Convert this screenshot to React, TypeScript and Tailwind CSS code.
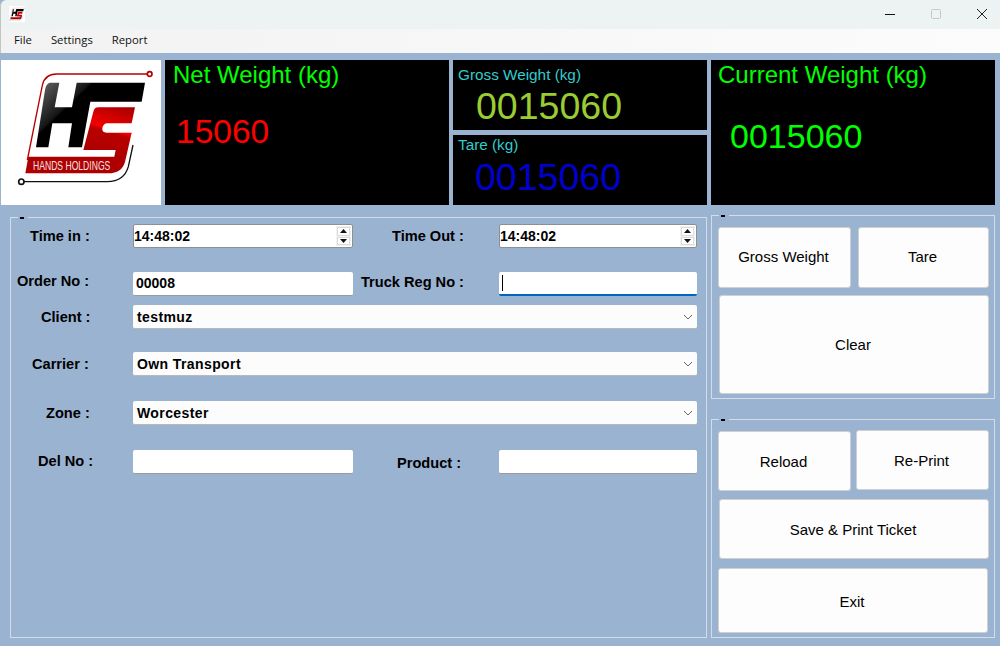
import type { ReactNode } from "react";

function HsLogo({ small = false }: { small?: boolean }) {
  return (
    <svg viewBox={small ? "40 20 430 360" : "3 0 480 435"} className="h-full w-full">
      <defs>
        <linearGradient id="hsBlack" gradientUnits="userSpaceOnUse" x1="140" y1="70" x2="250" y2="185">
          <stop offset="0" stopColor="#5a5a5a" />
          <stop offset="0.55" stopColor="#161616" />
          <stop offset="0.6" stopColor="#000" />
          <stop offset="1" stopColor="#000" />
        </linearGradient>
        <linearGradient id="hsRed" gradientUnits="userSpaceOnUse" x1="345" y1="130" x2="300" y2="280">
          <stop offset="0" stopColor="#a80000" />
          <stop offset="0.5" stopColor="#f40000" />
          <stop offset="0.56" stopColor="#b80000" />
          <stop offset="1" stopColor="#ae0000" />
        </linearGradient>
      </defs>
      <path d="M441 42H170Q134 42 127 76L82 300" fill="none" stroke="#b80000" strokeWidth="4" />
      <circle cx="449" cy="42" r="7" fill="#fff" stroke="#b00000" strokeWidth="5" />
      <path d="M72 365H322Q372 365 385 320L399 255" fill="none" stroke="#111" strokeWidth="4" />
      <circle cx="64" cy="365" r="8" fill="#fff" stroke="#111" strokeWidth="5" />
      <path
        d="M150 68H178L164 142H216L230 68H435L425 125H271L246 262H205L216 190H157L145 262H108L135 90Q138 70 150 68Z"
        fill="url(#hsBlack)"
      />
      <path
        d="M295 142H405L395 190H322Q310 190 307 204Q305 218 320 218H395L375 306Q365 340 325 340H76L85 290H343L347 270H250L280 155Q283 142 295 142Z"
        fill="url(#hsRed)"
      />
      {!small && (
        <text
          x="99"
          y="330"
          fill="#f4e4e4"
          fontSize="38"
          textLength="232"
          lengthAdjust="spacingAndGlyphs"
          fontFamily='"Liberation Sans", sans-serif'
        >
          HANDS HOLDINGS
        </text>
      )}
    </svg>
  );
}

function Group({ className, children }: { className: string; children: ReactNode }) {
  return (
    <div className={`relative border border-[#d3dde8] ${className}`}>
      <span className="absolute left-[7px] -top-[1px] h-[3px] w-[10px] bg-[#9ab3d1] pl-[2px]">
        <span className="block h-[2px] w-[4px] bg-black" />
      </span>
      {children}
    </div>
  );
}

function WinButton({ className, children }: { className: string; children: ReactNode }) {
  return (
    <button
      type="button"
      className={`flex items-center justify-center rounded-[3px] border border-[#d0d0d0] bg-[#fdfdfd] pr-[2px] text-[15px] text-black ${className}`}
    >
      {children}
    </button>
  );
}

function Label({ className, children }: { className: string; children: ReactNode }) {
  return <span className={`whitespace-nowrap text-[14.6px] font-bold text-black ${className}`}>{children}</span>;
}

function TimeBox({ value, width }: { value: string; width: string }) {
  return (
    <div className={`flex h-[24px] items-center justify-between rounded-[2px] border border-[#8f8f8f] bg-white pr-[1px] text-[14px] font-bold text-black ${width}`}>
      <span>{value}</span>
      <div className="flex h-[20px] w-[15px] flex-col gap-[1px] bg-[#f2f2f2] p-[1px]">
        <span className="flex flex-1 items-center justify-center border border-[#dcdcdc] bg-white">
          <svg width="7" height="4" viewBox="0 0 7 4"><path d="M3.5 0L7 4H0Z" fill="#111" /></svg>
        </span>
        <span className="flex flex-1 items-center justify-center border border-[#dcdcdc] bg-white">
          <svg width="7" height="4" viewBox="0 0 7 4"><path d="M0 0H7L3.5 4Z" fill="#111" /></svg>
        </span>
      </div>
    </div>
  );
}

function TextBox({ value, width, focused = false }: { value?: string; width: string; focused?: boolean }) {
  return (
    <div
      className={`flex h-[24px] items-center rounded-[2px] bg-white pl-[3px] text-[14px] font-bold text-black ${width} ${
        focused ? "border-b-2 border-[#0067c0]" : "border-b border-[#9a9a9a]"
      }`}
    >
      {focused ? <span className="h-[16px] w-[1px] bg-black" /> : value}
    </div>
  );
}

function ComboBox({ value }: { value: string }) {
  return (
    <div className="flex h-[24px] w-[564px] items-center justify-between rounded-[2px] border-b border-[#b9b9b9] bg-[#fcfcfc] pr-[4px] pl-[4px] pt-[1px] text-[14px] font-bold tracking-[0.4px] text-black">
      <span>{value}</span>
      <svg width="10" height="6" viewBox="0 0 10 6">
        <path d="M1 1L5 5L9 1" fill="none" stroke="#666" strokeWidth="1" />
      </svg>
    </div>
  );
}

export default function App() {
  return (
    <div
      className="flex h-[646px] w-[1000px] flex-col overflow-hidden bg-[#9ab3d1]"
      style={{ fontFamily: '"Liberation Sans", Arial, sans-serif' }}
    >
      {/* title bar */}
      <div className="flex h-[29px] items-center justify-between rounded-tl-[6px] border-l border-[#c4c4c4] bg-[#edf3f3] pl-[8px]">
        <div className="mb-[2px] h-[16px] w-[16px] bg-white">
          <HsLogo small />
        </div>
        <div className="mb-[2px] flex items-center gap-[36px] pr-[13px]">
          <svg width="10" height="10" viewBox="0 0 10 10"><path d="M0 5.5H10" stroke="#111" strokeWidth="1" /></svg>
          <svg width="10" height="10" viewBox="0 0 10 10"><rect x="0.5" y="0.5" width="9" height="9" rx="1" fill="none" stroke="#c6c9c9" /></svg>
          <svg width="10" height="10" viewBox="0 0 10 10"><path d="M0 0L10 10M10 0L0 10" stroke="#222" strokeWidth="1" /></svg>
        </div>
      </div>

      {/* menu */}
      <div
        className="flex h-[24px] items-center gap-[19px] border-l border-[#c4c4c4] bg-gradient-to-r from-[#f2f2f2] to-[#fcfcfc] pb-[1px] pl-[13px] text-[11.3px] text-[#111]"
        style={{ fontFamily: '"Open Sans", "Noto Sans", sans-serif' }}
      >
        <span>File</span>
        <span>Settings</span>
        <span>Report</span>
      </div>

      {/* weight displays */}
      <div className="mt-[7px] flex h-[145px] gap-[4px] pl-[1px]">
        <div className="w-[160px] bg-white">
          <HsLogo />
        </div>
        <div className="flex w-[284px] flex-col bg-black pl-[8px] text-[24px] leading-[30px] text-[#00ff00]">
          <span>Net Weight (kg)</span>
          <span className="mt-[22px] pl-[3px] text-[33.5px] leading-[40px] text-[#ff0000]">15060</span>
        </div>
        <div className="flex w-[254px] flex-col gap-[5px]">
          <div className="flex h-[70px] flex-col bg-black pl-[5px]">
            <span className="mt-[6px] text-[15.3px] leading-[18px] text-[#33cccc]">Gross Weight (kg)</span>
            <span className="mt-[1px] pl-[18px] text-[37.5px] leading-[42px] text-[#9acd32]">0015060</span>
          </div>
          <div className="flex h-[70px] flex-col bg-black pl-[5px]">
            <span className="mt-[1px] text-[15.3px] leading-[18px] text-[#33cccc]">Tare (kg)</span>
            <span className="mt-[2px] pl-[17px] text-[37.5px] leading-[42px] text-[#0000cd]">0015060</span>
          </div>
        </div>
        <div className="flex w-[284px] flex-col bg-black pl-[7px] text-[24px] leading-[30px] text-[#00ff00]">
          <span>Current Weight (kg)</span>
          <span className="mt-[26px] pl-[12px] text-[34px] leading-[40px]">0015060</span>
        </div>
      </div>

      <div className="flex pl-[10px]">
        {/* ticket form */}
        <Group className="mt-[12px] h-[421px] w-[697px]">
          <div className="flex flex-col pt-[6px]">
            <div className="flex h-[24px] items-center">
              <Label className="ml-[19px] mt-[1px] w-[103px]">Time in :</Label>
              <TimeBox value="14:48:02" width="w-[220px]" />
              <Label className="ml-[39px] mt-[1px] w-[107px]">Time Out :</Label>
              <TimeBox value="14:48:02" width="w-[198px]" />
            </div>
            <div className="mt-[24px] flex h-[24px] items-center">
              <Label className="mb-[4px] ml-[6px] w-[116px]">Order No :</Label>
              <TextBox value="00008" width="w-[220px]" />
              <Label className="mb-[2px] ml-[8px] w-[138px]">Truck Reg No :</Label>
              <TextBox width="w-[198px]" focused />
            </div>
            <div className="mt-[9px] flex h-[24px] items-center">
              <Label className="ml-[30px] mt-[1px] w-[92px]">Client :</Label>
              <ComboBox value="testmuz" />
            </div>
            <div className="mt-[23px] flex h-[24px] items-center">
              <Label className="ml-[21px] mt-[2px] w-[101px]">Carrier :</Label>
              <ComboBox value="Own Transport" />
            </div>
            <div className="mt-[25px] flex h-[24px] items-center">
              <Label className="ml-[35px] mt-[2px] w-[87px]">Zone :</Label>
              <ComboBox value="Worcester" />
            </div>
            <div className="mt-[25px] flex h-[24px] items-center">
              <Label className="ml-[27px] w-[95px]">Del No :</Label>
              <TextBox width="w-[220px]" />
              <Label className="ml-[44px] mt-[4px] w-[102px]">Product :</Label>
              <TextBox width="w-[198px]" />
            </div>
          </div>
        </Group>

        {/* actions */}
        <div className="ml-[4px] mt-[10px] flex w-[284px] flex-col gap-[20px]">
          <Group className="flex h-[184px] flex-col gap-[7px] pt-[11px] pl-[6px]">
            <div className="flex gap-[7px]">
              <WinButton className="h-[61px] w-[133px]">Gross Weight</WinButton>
              <WinButton className="h-[61px] w-[131px]">Tare</WinButton>
            </div>
            <WinButton className="ml-[1px] h-[99px] w-[270px] pt-[1px]">Clear</WinButton>
          </Group>
          <Group className="flex h-[219px] flex-col gap-[8px] pt-[10px] pl-[6px]">
            <div className="flex gap-[5px]">
              <WinButton className="mt-[1px] h-[60px] w-[133px] pt-[2px]">Reload</WinButton>
              <WinButton className="h-[60px] w-[133px] pt-[2px]">Re-Print</WinButton>
            </div>
            <WinButton className="ml-[1px] h-[60px] w-[270px] pt-[2px]">Save &amp; Print Ticket</WinButton>
            <WinButton className="mt-[1px] h-[65px] w-[270px] pt-[3px]">Exit</WinButton>
          </Group>
        </div>
      </div>
    </div>
  );
}
